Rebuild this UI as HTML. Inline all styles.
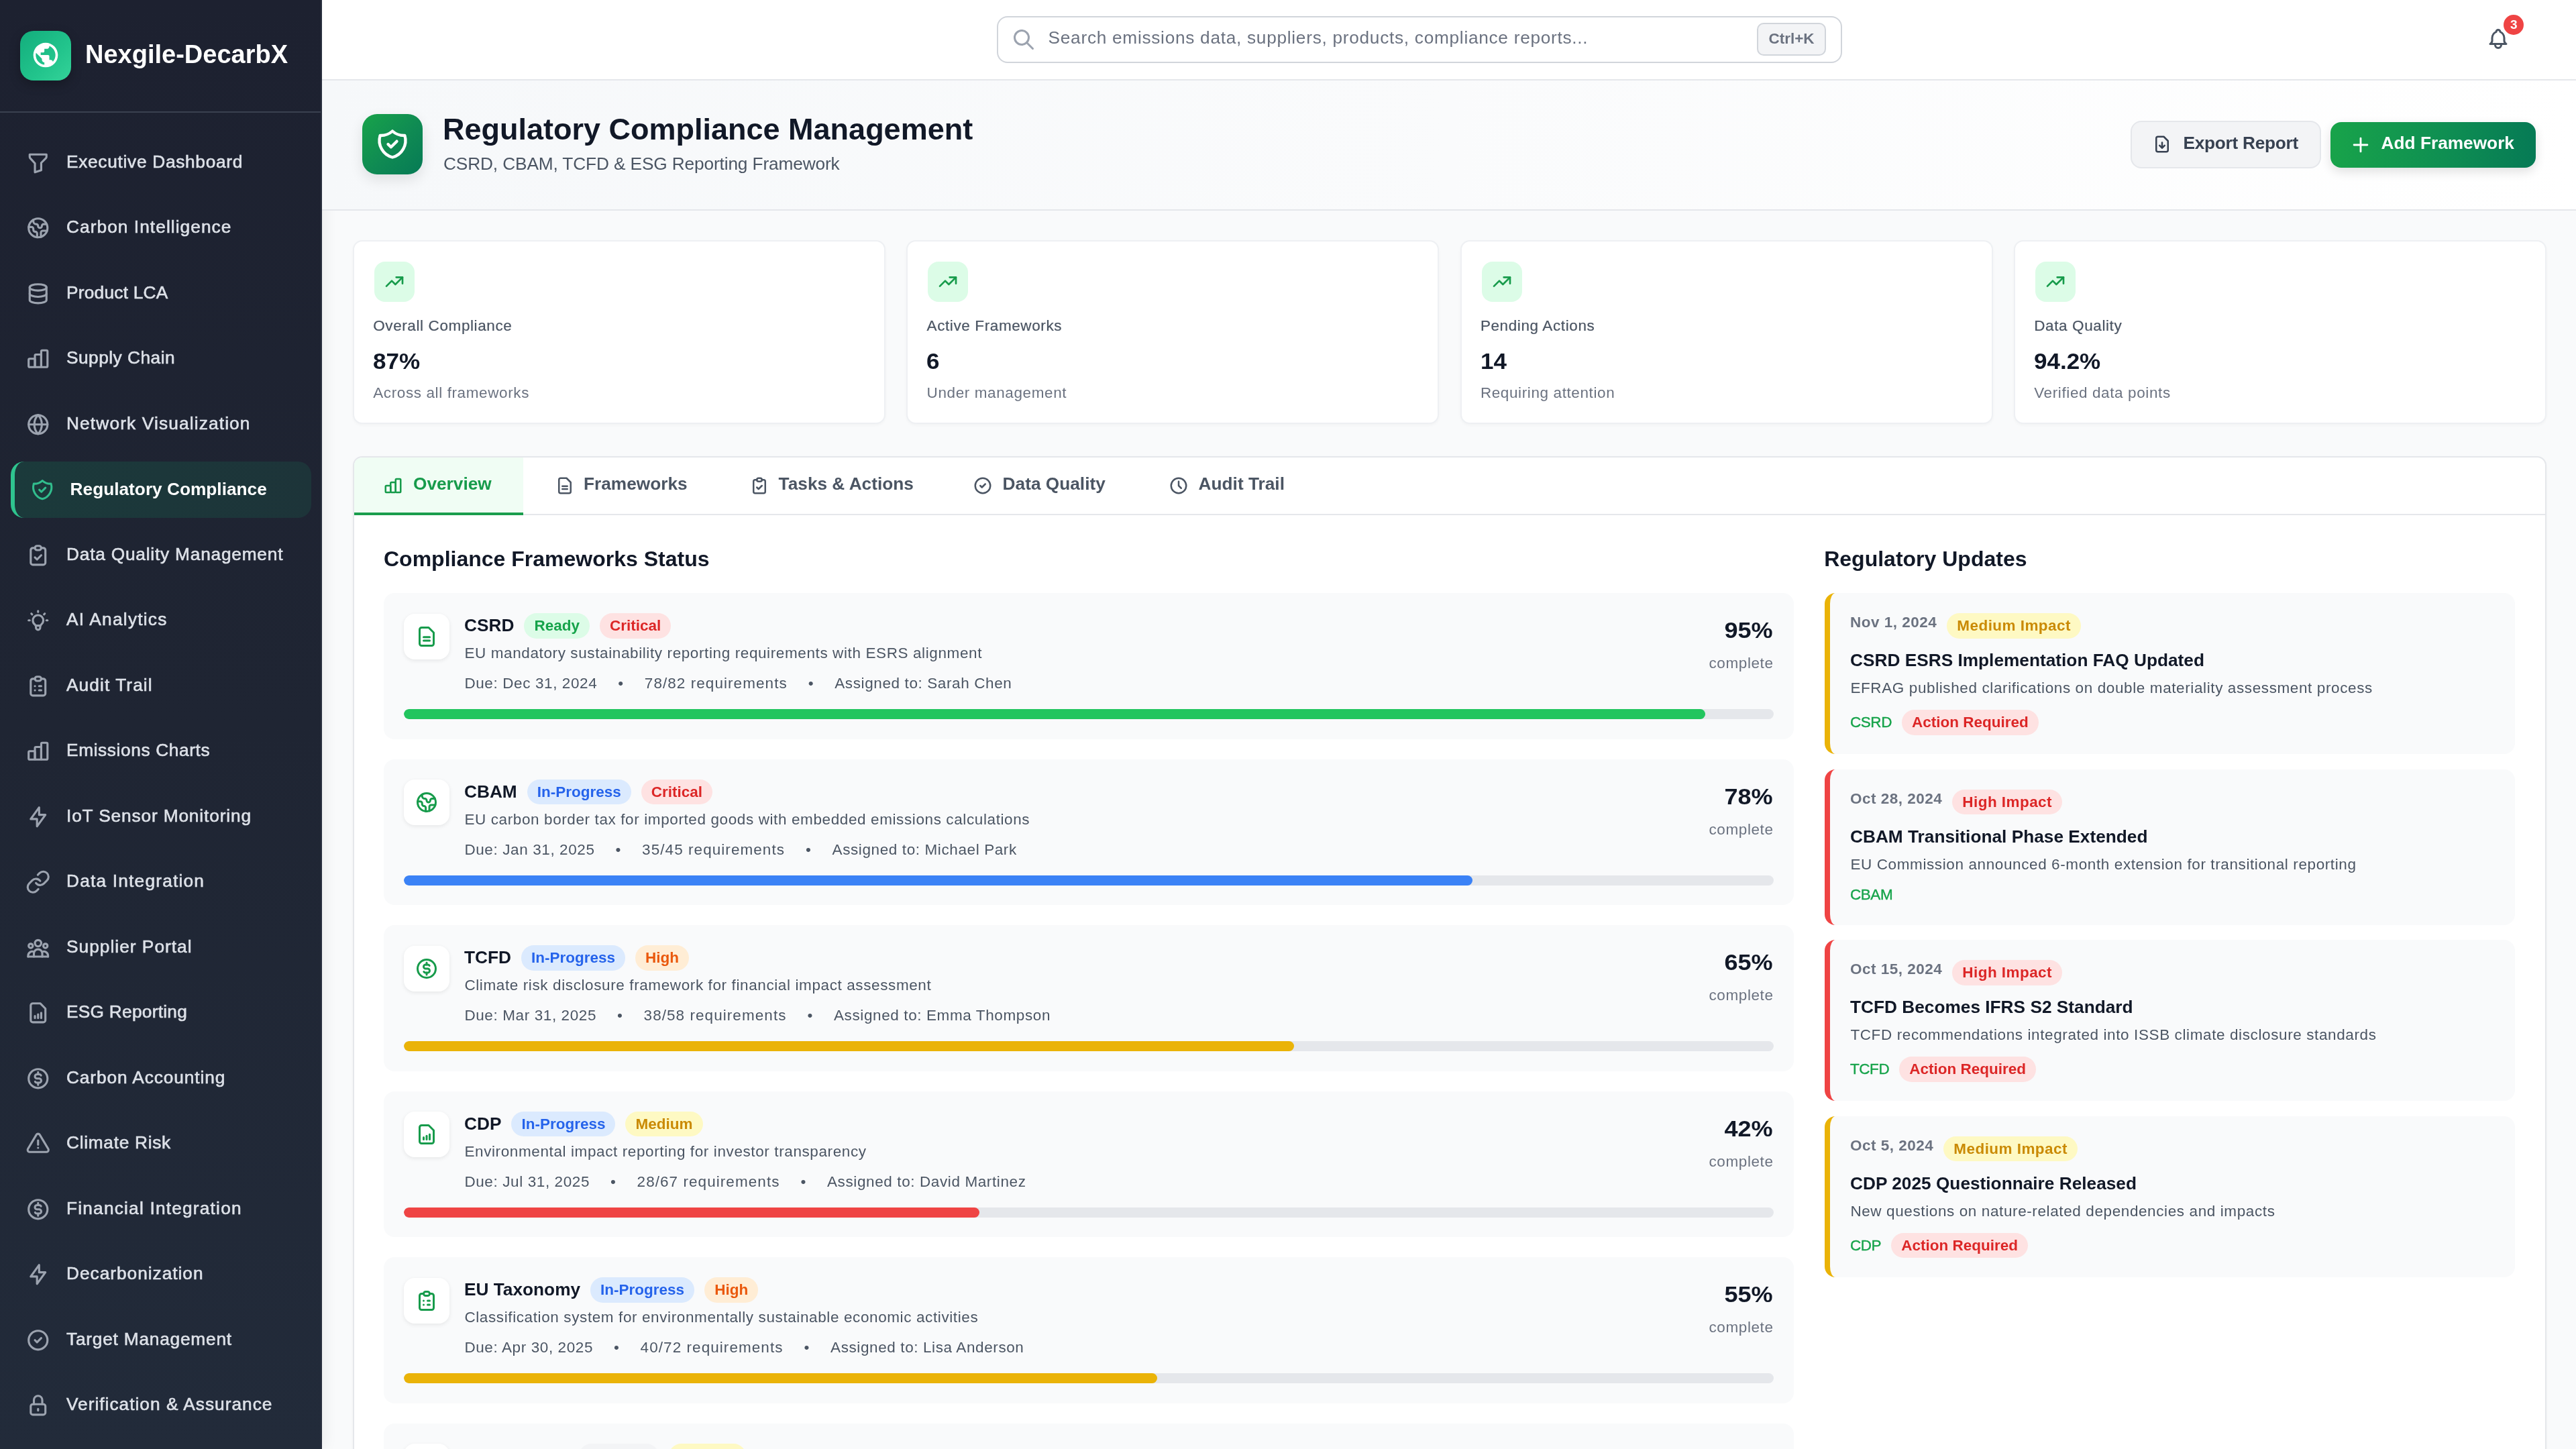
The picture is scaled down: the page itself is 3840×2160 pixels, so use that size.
<!DOCTYPE html>
<html><head><meta charset="utf-8"><title>Regulatory Compliance Management</title>
<style>
*{box-sizing:border-box;margin:0;padding:0}
html,body{width:100%;height:100%;overflow:hidden;background:#f9fafb}
.root{will-change:transform;position:relative;width:1920px;height:1080px;overflow:hidden;font-family:"Liberation Sans",sans-serif;background:#f9fafb}
@media (min-width:2500px){.root{zoom:2}}
.t{position:absolute;white-space:nowrap}
.a{position:absolute}
svg{display:block}
</style></head><body><div class="root">

<div class="a" style="left:0;top:0;width:240px;height:1080px;background:linear-gradient(180deg,#1d2130 0%,#1f2533 50%,#222b3a 100%);border-right:1px solid #2b3140;box-shadow:2px 0 10px rgba(0,0,0,0.06)">
<div class="a" style="left:0;top:83px;width:239px;height:1px;background:#3a4150"></div>
<div class="a" style="left:15px;top:22.75px;width:38px;height:37.25px;border-radius:10px;background:linear-gradient(135deg,#13ad7c 0%,#22c48c 60%,#34d399 100%);box-shadow:0 3px 8px rgba(0,0,0,0.25)"><svg viewBox="0 0 24 24" style="position:absolute;left:7.9px;top:7.2px;width:22px;height:22px" fill="#fff" fill-rule="evenodd"><path d="M12 2C6.48 2 2 6.48 2 12s4.48 10 10 10 10-4.48 10-10S17.52 2 12 2zm-1 17.93c-3.95-.49-7-3.85-7-7.93 0-.62.08-1.21.21-1.79L9 15v1c0 1.1.9 2 2 2v1.93zm6.9-2.54c-.26-.81-1-1.39-1.9-1.39h-1v-3c0-.55-.45-1-1-1H8v-2h2c.55 0 1-.45 1-1V7h2c1.1 0 2-.9 2-2v-.41c2.93 1.19 5 4.06 5 7.41 0 2.08-.8 3.97-2.1 5.39z"/></svg></div>
<div class="t" style="left:63.5px;top:27.40px;font-size:19px;line-height:26.6px;color:#ffffff;font-weight:700;">Nexgile-DecarbX</div>
<svg viewBox="0 0 24 24" style="width:18.75px;height:18.75px;position:absolute;left:18.95px;top:111.8px;color:#9ca3af;" fill="none" stroke="currentColor" stroke-width="2" stroke-linecap="round" stroke-linejoin="round"><path d="M4 4h16v2.172a2 2 0 0 1 -.586 1.414l-4.414 4.414v7l-6 2v-8.5l-4.48 -4.928a2 2 0 0 1 -.52 -1.345v-2.227z"/></svg>
<div class="t" style="left:49.5px;top:111.41px;font-size:13.125px;line-height:18.38px;color:#dde1e8;font-weight:400;letter-spacing:0.0272em;-webkit-text-stroke:0.3px #dde1e8;">Executive Dashboard</div>
<svg viewBox="0 0 24 24" style="width:18.75px;height:18.75px;position:absolute;left:18.95px;top:160.55px;color:#9ca3af;" fill="none" stroke="currentColor" stroke-width="2" stroke-linecap="round" stroke-linejoin="round"><g transform="translate(12 12) scale(0.9) translate(-12 -12)" stroke-width="2.22"><circle cx="12" cy="12" r="10"/><path d="M21.54 15H17a2 2 0 0 0-2 2v4.54"/><path d="M7 3.34V5a3 3 0 0 0 3 3a2 2 0 0 1 2 2c0 1.1.9 2 2 2a2 2 0 0 0 2-2c0-1.1.9-2 2-2h3.17"/><path d="M11 21.95V18a2 2 0 0 0-2-2a2 2 0 0 1-2-2v-1a2 2 0 0 0-2-2H2.05"/></g></svg>
<div class="t" style="left:49.5px;top:160.16px;font-size:13.125px;line-height:18.38px;color:#dde1e8;font-weight:400;letter-spacing:0.0406em;-webkit-text-stroke:0.3px #dde1e8;">Carbon Intelligence</div>
<svg viewBox="0 0 24 24" style="width:18.75px;height:18.75px;position:absolute;left:18.95px;top:209.3px;color:#9ca3af;" fill="none" stroke="currentColor" stroke-width="2" stroke-linecap="round" stroke-linejoin="round"><path d="M12 6m-8 0a8 3 0 1 0 16 0a8 3 0 1 0 -16 0"/><path d="M4 6v6a8 3 0 0 0 16 0v-6"/><path d="M4 12v6a8 3 0 0 0 16 0v-6"/></svg>
<div class="t" style="left:49.5px;top:208.91px;font-size:13.125px;line-height:18.38px;color:#dde1e8;font-weight:400;letter-spacing:0.0093em;-webkit-text-stroke:0.3px #dde1e8;">Product LCA</div>
<svg viewBox="0 0 24 24" style="width:18.75px;height:18.75px;position:absolute;left:18.95px;top:258.05px;color:#9ca3af;" fill="none" stroke="currentColor" stroke-width="2" stroke-linecap="round" stroke-linejoin="round"><path d="M3 13a1 1 0 0 1 1 -1h4a1 1 0 0 1 1 1v6a1 1 0 0 1 -1 1h-4a1 1 0 0 1 -1 -1z"/><path d="M9 9a1 1 0 0 1 1 -1h4a1 1 0 0 1 1 1v10a1 1 0 0 1 -1 1h-4a1 1 0 0 1 -1 -1z"/><path d="M15 5a1 1 0 0 1 1 -1h4a1 1 0 0 1 1 1v14a1 1 0 0 1 -1 1h-4a1 1 0 0 1 -1 -1z"/></svg>
<div class="t" style="left:49.5px;top:257.66px;font-size:13.125px;line-height:18.38px;color:#dde1e8;font-weight:400;letter-spacing:0.0188em;-webkit-text-stroke:0.3px #dde1e8;">Supply Chain</div>
<svg viewBox="0 0 24 24" style="width:18.75px;height:18.75px;position:absolute;left:18.95px;top:306.8px;color:#9ca3af;" fill="none" stroke="currentColor" stroke-width="2" stroke-linecap="round" stroke-linejoin="round"><g transform="translate(12 12) scale(0.9) translate(-12 -12)" stroke-width="2.22"><circle cx="12" cy="12" r="10"/><path d="M12 2a14.5 14.5 0 0 0 0 20a14.5 14.5 0 0 0 0-20"/><path d="M2 12h20"/></g></svg>
<div class="t" style="left:49.5px;top:306.41px;font-size:13.125px;line-height:18.38px;color:#dde1e8;font-weight:400;letter-spacing:0.0438em;-webkit-text-stroke:0.3px #dde1e8;">Network Visualization</div>
<div class="a" style="left:8px;top:343.95px;width:224px;height:42px;border-radius:10px;background:linear-gradient(90deg,#1b3a3b,#1d3439);border-left:3px solid #2fc48f"></div>
<svg viewBox="0 0 24 24" style="width:18.2px;height:18.2px;position:absolute;left:22.25px;top:355.85px;color:#31bd8d;" fill="none" stroke="currentColor" stroke-width="2" stroke-linecap="round" stroke-linejoin="round"><path d="M9 12l2 2l4 -4"/><path d="M12 3a12 12 0 0 0 8.5 3a12 12 0 0 1 -8.5 15a12 12 0 0 1 -8.5 -15a12 12 0 0 0 8.5 -3"/></svg>
<div class="t" style="left:52.3px;top:355.36px;font-size:13.125px;line-height:18.38px;color:#ffffff;font-weight:700;">Regulatory Compliance</div>
<svg viewBox="0 0 24 24" style="width:18.75px;height:18.75px;position:absolute;left:18.95px;top:404.3px;color:#9ca3af;" fill="none" stroke="currentColor" stroke-width="2" stroke-linecap="round" stroke-linejoin="round"><path d="M9 5h-2a2 2 0 0 0 -2 2v12a2 2 0 0 0 2 2h10a2 2 0 0 0 2 -2v-12a2 2 0 0 0 -2 -2h-2"/><path d="M9 5a2 2 0 0 1 2 -2h2a2 2 0 0 1 2 2v0a2 2 0 0 1 -2 2h-2a2 2 0 0 1 -2 -2z"/><path d="M9 14l2 2l4 -4"/></svg>
<div class="t" style="left:49.5px;top:403.91px;font-size:13.125px;line-height:18.38px;color:#dde1e8;font-weight:400;letter-spacing:0.0303em;-webkit-text-stroke:0.3px #dde1e8;">Data Quality Management</div>
<svg viewBox="0 0 24 24" style="width:18.75px;height:18.75px;position:absolute;left:18.95px;top:453.05px;color:#9ca3af;" fill="none" stroke="currentColor" stroke-width="2" stroke-linecap="round" stroke-linejoin="round"><path d="M3 12h1m8 -9v1m8 8h1m-15.4 -6.4l.7 .7m12.1 -.7l-.7 .7"/><path d="M9 16a5 5 0 1 1 6 0a3.5 3.5 0 0 0 -1 3a2 2 0 0 1 -4 0a3.5 3.5 0 0 0 -1 -3"/><path d="M9.7 17l4.6 0"/></svg>
<div class="t" style="left:49.5px;top:452.66px;font-size:13.125px;line-height:18.38px;color:#dde1e8;font-weight:400;letter-spacing:0.0473em;-webkit-text-stroke:0.3px #dde1e8;">AI Analytics</div>
<svg viewBox="0 0 24 24" style="width:18.75px;height:18.75px;position:absolute;left:18.95px;top:501.8px;color:#9ca3af;" fill="none" stroke="currentColor" stroke-width="2" stroke-linecap="round" stroke-linejoin="round"><path d="M9 5h-2a2 2 0 0 0 -2 2v12a2 2 0 0 0 2 2h10a2 2 0 0 0 2 -2v-12a2 2 0 0 0 -2 -2h-2"/><path d="M9 5a2 2 0 0 1 2 -2h2a2 2 0 0 1 2 2v0a2 2 0 0 1 -2 2h-2a2 2 0 0 1 -2 -2z"/><path d="M9 12l.01 0"/><path d="M13 12l2 0"/><path d="M9 16l.01 0"/><path d="M13 16l2 0"/></svg>
<div class="t" style="left:49.5px;top:501.41px;font-size:13.125px;line-height:18.38px;color:#dde1e8;font-weight:400;letter-spacing:0.0415em;-webkit-text-stroke:0.3px #dde1e8;">Audit Trail</div>
<svg viewBox="0 0 24 24" style="width:18.75px;height:18.75px;position:absolute;left:18.95px;top:550.55px;color:#9ca3af;" fill="none" stroke="currentColor" stroke-width="2" stroke-linecap="round" stroke-linejoin="round"><path d="M3 13a1 1 0 0 1 1 -1h4a1 1 0 0 1 1 1v6a1 1 0 0 1 -1 1h-4a1 1 0 0 1 -1 -1z"/><path d="M9 9a1 1 0 0 1 1 -1h4a1 1 0 0 1 1 1v10a1 1 0 0 1 -1 1h-4a1 1 0 0 1 -1 -1z"/><path d="M15 5a1 1 0 0 1 1 -1h4a1 1 0 0 1 1 1v14a1 1 0 0 1 -1 1h-4a1 1 0 0 1 -1 -1z"/></svg>
<div class="t" style="left:49.5px;top:550.16px;font-size:13.125px;line-height:18.38px;color:#dde1e8;font-weight:400;letter-spacing:0.0239em;-webkit-text-stroke:0.3px #dde1e8;">Emissions Charts</div>
<svg viewBox="0 0 24 24" style="width:18.75px;height:18.75px;position:absolute;left:18.95px;top:599.3px;color:#9ca3af;" fill="none" stroke="currentColor" stroke-width="2" stroke-linecap="round" stroke-linejoin="round"><path d="M13 3l0 7l6 0l-8 11l0 -7l-6 0l8 -11"/></svg>
<div class="t" style="left:49.5px;top:598.91px;font-size:13.125px;line-height:18.38px;color:#dde1e8;font-weight:400;letter-spacing:0.0328em;-webkit-text-stroke:0.3px #dde1e8;">IoT Sensor Monitoring</div>
<svg viewBox="0 0 24 24" style="width:18.75px;height:18.75px;position:absolute;left:18.95px;top:648.05px;color:#9ca3af;" fill="none" stroke="currentColor" stroke-width="2" stroke-linecap="round" stroke-linejoin="round"><path d="M10 13a5 5 0 0 0 7.54.54l3-3a5 5 0 0 0-7.07-7.07l-1.72 1.71"/><path d="M14 11a5 5 0 0 0-7.54-.54l-3 3a5 5 0 0 0 7.07 7.07l1.71-1.71"/></svg>
<div class="t" style="left:49.5px;top:647.66px;font-size:13.125px;line-height:18.38px;color:#dde1e8;font-weight:400;letter-spacing:0.046em;-webkit-text-stroke:0.3px #dde1e8;">Data Integration</div>
<svg viewBox="0 0 24 24" style="width:18.75px;height:18.75px;position:absolute;left:18.95px;top:696.8px;color:#9ca3af;" fill="none" stroke="currentColor" stroke-width="2" stroke-linecap="round" stroke-linejoin="round"><circle cx="12" cy="7.7" r="3"/><circle cx="5" cy="10.2" r="2"/><circle cx="19" cy="10.2" r="2"/><path d="M2.5 20.5v-1a4 4 0 0 1 5.6 -3.6"/><path d="M8 20.5v-3a4 4 0 0 1 8 0v3"/><path d="M21.5 20.5v-1a4 4 0 0 0 -5.6 -3.6"/><path d="M2.5 20.5h19"/></svg>
<div class="t" style="left:49.5px;top:696.41px;font-size:13.125px;line-height:18.38px;color:#dde1e8;font-weight:400;letter-spacing:0.0392em;-webkit-text-stroke:0.3px #dde1e8;">Supplier Portal</div>
<svg viewBox="0 0 24 24" style="width:18.75px;height:18.75px;position:absolute;left:18.95px;top:745.55px;color:#9ca3af;" fill="none" stroke="currentColor" stroke-width="2" stroke-linecap="round" stroke-linejoin="round"><path d="M5 5a2 2 0 0 1 2 -2h7l5 5v11a2 2 0 0 1 -2 2h-10a2 2 0 0 1 -2 -2z"/><path d="M9 17v-2"/><path d="M12 17v-3.5"/><path d="M15 17v-5"/></svg>
<div class="t" style="left:49.5px;top:745.16px;font-size:13.125px;line-height:18.38px;color:#dde1e8;font-weight:400;letter-spacing:0.0103em;-webkit-text-stroke:0.3px #dde1e8;">ESG Reporting</div>
<svg viewBox="0 0 24 24" style="width:18.75px;height:18.75px;position:absolute;left:18.95px;top:794.3px;color:#9ca3af;" fill="none" stroke="currentColor" stroke-width="2" stroke-linecap="round" stroke-linejoin="round"><circle cx="12" cy="12" r="9"/><path d="M14.8 9a2 2 0 0 0 -1.8 -1h-2a2 2 0 1 0 0 4h2a2 2 0 1 1 0 4h-2a2 2 0 0 1 -1.8 -1"/><path d="M12 6v2m0 8v2"/></svg>
<div class="t" style="left:49.5px;top:793.91px;font-size:13.125px;line-height:18.38px;color:#dde1e8;font-weight:400;letter-spacing:0.0346em;-webkit-text-stroke:0.3px #dde1e8;">Carbon Accounting</div>
<svg viewBox="0 0 24 24" style="width:18.75px;height:18.75px;position:absolute;left:18.95px;top:843.05px;color:#9ca3af;" fill="none" stroke="currentColor" stroke-width="2" stroke-linecap="round" stroke-linejoin="round"><path d="M12 9v4"/><path d="M10.363 3.591l-8.106 13.534a1.914 1.914 0 0 0 1.636 2.871h16.214a1.914 1.914 0 0 0 1.636 -2.87l-8.106 -13.536a1.914 1.914 0 0 0 -3.274 0z"/><path d="M12 16h.01"/></svg>
<div class="t" style="left:49.5px;top:842.66px;font-size:13.125px;line-height:18.38px;color:#dde1e8;font-weight:400;letter-spacing:0.0272em;-webkit-text-stroke:0.3px #dde1e8;">Climate Risk</div>
<svg viewBox="0 0 24 24" style="width:18.75px;height:18.75px;position:absolute;left:18.95px;top:891.8px;color:#9ca3af;" fill="none" stroke="currentColor" stroke-width="2" stroke-linecap="round" stroke-linejoin="round"><circle cx="12" cy="12" r="9"/><path d="M14.8 9a2 2 0 0 0 -1.8 -1h-2a2 2 0 1 0 0 4h2a2 2 0 1 1 0 4h-2a2 2 0 0 1 -1.8 -1"/><path d="M12 6v2m0 8v2"/></svg>
<div class="t" style="left:49.5px;top:891.41px;font-size:13.125px;line-height:18.38px;color:#dde1e8;font-weight:400;letter-spacing:0.046em;-webkit-text-stroke:0.3px #dde1e8;">Financial Integration</div>
<svg viewBox="0 0 24 24" style="width:18.75px;height:18.75px;position:absolute;left:18.95px;top:940.55px;color:#9ca3af;" fill="none" stroke="currentColor" stroke-width="2" stroke-linecap="round" stroke-linejoin="round"><path d="M13 3l0 7l6 0l-8 11l0 -7l-6 0l8 -11"/></svg>
<div class="t" style="left:49.5px;top:940.16px;font-size:13.125px;line-height:18.38px;color:#dde1e8;font-weight:400;letter-spacing:0.0376em;-webkit-text-stroke:0.3px #dde1e8;">Decarbonization</div>
<svg viewBox="0 0 24 24" style="width:18.75px;height:18.75px;position:absolute;left:18.95px;top:989.3px;color:#9ca3af;" fill="none" stroke="currentColor" stroke-width="2" stroke-linecap="round" stroke-linejoin="round"><circle cx="12" cy="12" r="9"/><path d="M9 12l2 2l4 -4"/></svg>
<div class="t" style="left:49.5px;top:988.91px;font-size:13.125px;line-height:18.38px;color:#dde1e8;font-weight:400;letter-spacing:0.03em;-webkit-text-stroke:0.3px #dde1e8;">Target Management</div>
<svg viewBox="0 0 24 24" style="width:18.75px;height:18.75px;position:absolute;left:18.95px;top:1038.05px;color:#9ca3af;" fill="none" stroke="currentColor" stroke-width="2" stroke-linecap="round" stroke-linejoin="round"><path d="M5 13a2 2 0 0 1 2 -2h10a2 2 0 0 1 2 2v6a2 2 0 0 1 -2 2h-10a2 2 0 0 1 -2 -2v-6z"/><path d="M12 15.5v1.5"/><path d="M8 11v-4a4 4 0 1 1 8 0v4"/></svg>
<div class="t" style="left:49.5px;top:1037.66px;font-size:13.125px;line-height:18.38px;color:#dde1e8;font-weight:400;letter-spacing:0.0387em;-webkit-text-stroke:0.3px #dde1e8;">Verification &amp; Assurance</div>
</div>
<div class="a" style="left:240px;top:0;width:1680px;height:60px;background:#ffffff;border-bottom:1px solid #e5e7eb"></div>
<div class="a" style="left:743px;top:12px;width:630px;height:35px;border:1px solid #d1d5db;border-radius:8px;background:#fff"></div>
<svg viewBox="0 0 24 24" style="width:18px;height:18px;position:absolute;left:754px;top:20.5px;color:#9ca3af;" fill="none" stroke="currentColor" stroke-width="2" stroke-linecap="round" stroke-linejoin="round"><path d="M10 10m-7 0a7 7 0 1 0 14 0a7 7 0 1 0 -14 0"/><path d="M21 21l-6 -6"/></svg>
<div class="t" style="left:781.3px;top:19.01px;font-size:13.125px;line-height:18.38px;color:#6b7280;font-weight:400;letter-spacing:0.027em;">Search emissions data, suppliers, products, compliance reports...</div>
<div class="a" style="left:1309.3px;top:17.2px;width:51.5px;height:24.5px;border:1px solid #d1d5db;border-radius:5px;background:#f3f4f6"></div>
<div class="t" style="left:1318.2px;top:21.02px;font-size:11.25px;line-height:15.75px;color:#6b7280;font-weight:700;">Ctrl+K</div>
<svg viewBox="0 0 24 24" style="width:18px;height:18px;position:absolute;left:1852.75px;top:20px;color:#4b5563;" fill="none" stroke="currentColor" stroke-width="2" stroke-linecap="round" stroke-linejoin="round"><path d="M10 5a2 2 0 1 1 4 0a7 7 0 0 1 4 6v3a4 4 0 0 0 2 3h-16a4 4 0 0 0 2 -3v-3a7 7 0 0 1 4 -6"/><path d="M9 17v1a3 3 0 0 0 6 0v-1"/></svg>
<div class="a" style="left:1866px;top:11px;width:15px;height:15px;border-radius:50%;background:#ef4444"></div>
<div class="t" style="left:1871px;top:11.95px;font-size:9.5px;line-height:13.3px;color:#ffffff;font-weight:700;">3</div>
<div class="a" style="left:240px;top:60px;width:1680px;height:97px;background:linear-gradient(90deg,#f6f8fa 0%,#fafbfc 50%,#ffffff 100%);border-bottom:1px solid #e5e7eb"></div>
<div class="a" style="left:270px;top:85px;width:45px;height:45px;border-radius:11px;background:linear-gradient(135deg,#18a34a 0%,#0f8a53 55%,#067a55 100%);box-shadow:0 4px 10px rgba(0,0,0,0.10)"><svg viewBox="0 0 24 24" style="width:26px;height:26px;position:absolute;left:9.5px;top:9.5px;color:#ffffff;" fill="none" stroke="currentColor" stroke-width="2" stroke-linecap="round" stroke-linejoin="round"><path d="M9 12l2 2l4 -4"/><path d="M12 3a12 12 0 0 0 8.5 3a12 12 0 0 1 -8.5 15a12 12 0 0 1 -8.5 -15a12 12 0 0 0 8.5 -3"/></svg></div>
<div class="t" style="left:330px;top:80.45px;font-size:22.5px;line-height:31.5px;color:#111827;font-weight:700;">Regulatory Compliance Management</div>
<div class="t" style="left:330.5px;top:113.11px;font-size:13.125px;line-height:18.38px;color:#4b5563;font-weight:400;letter-spacing:-0.005em;">CSRD, CBAM, TCFD &amp; ESG Reporting Framework</div>
<div class="a" style="left:1588px;top:90px;width:142px;height:35.5px;border:1px solid #e5e7eb;border-radius:8px;background:#f3f4f6"></div>
<svg viewBox="0 0 24 24" style="width:15px;height:15px;position:absolute;left:1604px;top:99.75px;color:#374151;" fill="none" stroke="currentColor" stroke-width="2" stroke-linecap="round" stroke-linejoin="round"><path d="M5 5a2 2 0 0 1 2 -2h7l5 5v11a2 2 0 0 1 -2 2h-10a2 2 0 0 1 -2 -2z"/><path d="M12 10v6"/><path d="M9 13.5l3 3l3 -3"/></svg>
<div class="t" style="left:1627.2px;top:97.61px;font-size:13.125px;line-height:18.38px;color:#374151;font-weight:700;letter-spacing:-0.01em;">Export Report</div>
<div class="a" style="left:1737px;top:91px;width:153px;height:34px;border-radius:8px;background:linear-gradient(90deg,#18a34a 0%,#0f8f52 55%,#067a55 100%);box-shadow:0 3px 8px rgba(0,0,0,0.12)"></div>
<svg viewBox="0 0 24 24" style="width:17px;height:17px;position:absolute;left:1751px;top:99.3px;color:#ffffff;" fill="none" stroke="currentColor" stroke-width="2" stroke-linecap="round" stroke-linejoin="round"><path d="M12 5l0 14"/><path d="M5 12l14 0"/></svg>
<div class="t" style="left:1774.8px;top:97.61px;font-size:13.125px;line-height:18.38px;color:#ffffff;font-weight:700;">Add Framework</div>
<div class="a" style="left:263.0px;top:179px;width:397px;height:137px;background:#fff;border:1px solid #eef0f3;border-radius:7px;box-shadow:0 1px 2px rgba(0,0,0,0.03)"></div>
<div class="a" style="left:279.0px;top:195px;width:30px;height:30px;border-radius:8px;background:#dcfce7"></div>
<svg viewBox="0 0 24 24" style="width:16px;height:16px;position:absolute;left:286.0px;top:202px;color:#179b4b;" fill="none" stroke="currentColor" stroke-width="2" stroke-linecap="round" stroke-linejoin="round"><path d="M3 17l6 -6l4 4l8 -8"/><path d="M14 7l7 0l0 7"/></svg>
<div class="t" style="left:278.1px;top:235.12px;font-size:11.25px;line-height:15.75px;color:#4b5563;font-weight:400;letter-spacing:0.027em;-webkit-text-stroke:0.12px #4b5563;">Overall Compliance</div>
<div class="t" style="left:278.0px;top:257.92px;font-size:16.4px;line-height:22.96px;color:#111827;font-weight:700;transform:scaleX(1.067);transform-origin:left center;">87%</div>
<div class="t" style="left:278.1px;top:285.12px;font-size:11.25px;line-height:15.75px;color:#6b7280;font-weight:400;letter-spacing:0.027em;">Across all frameworks</div>
<div class="a" style="left:675.67px;top:179px;width:397px;height:137px;background:#fff;border:1px solid #eef0f3;border-radius:7px;box-shadow:0 1px 2px rgba(0,0,0,0.03)"></div>
<div class="a" style="left:691.67px;top:195px;width:30px;height:30px;border-radius:8px;background:#dcfce7"></div>
<svg viewBox="0 0 24 24" style="width:16px;height:16px;position:absolute;left:698.67px;top:202px;color:#179b4b;" fill="none" stroke="currentColor" stroke-width="2" stroke-linecap="round" stroke-linejoin="round"><path d="M3 17l6 -6l4 4l8 -8"/><path d="M14 7l7 0l0 7"/></svg>
<div class="t" style="left:690.77px;top:235.12px;font-size:11.25px;line-height:15.75px;color:#4b5563;font-weight:400;letter-spacing:0.027em;-webkit-text-stroke:0.12px #4b5563;">Active Frameworks</div>
<div class="t" style="left:690.67px;top:257.92px;font-size:16.4px;line-height:22.96px;color:#111827;font-weight:700;transform:scaleX(1.067);transform-origin:left center;">6</div>
<div class="t" style="left:690.77px;top:285.12px;font-size:11.25px;line-height:15.75px;color:#6b7280;font-weight:400;letter-spacing:0.027em;">Under management</div>
<div class="a" style="left:1088.34px;top:179px;width:397px;height:137px;background:#fff;border:1px solid #eef0f3;border-radius:7px;box-shadow:0 1px 2px rgba(0,0,0,0.03)"></div>
<div class="a" style="left:1104.34px;top:195px;width:30px;height:30px;border-radius:8px;background:#dcfce7"></div>
<svg viewBox="0 0 24 24" style="width:16px;height:16px;position:absolute;left:1111.34px;top:202px;color:#179b4b;" fill="none" stroke="currentColor" stroke-width="2" stroke-linecap="round" stroke-linejoin="round"><path d="M3 17l6 -6l4 4l8 -8"/><path d="M14 7l7 0l0 7"/></svg>
<div class="t" style="left:1103.4399999999998px;top:235.12px;font-size:11.25px;line-height:15.75px;color:#4b5563;font-weight:400;letter-spacing:0.027em;-webkit-text-stroke:0.12px #4b5563;">Pending Actions</div>
<div class="t" style="left:1103.34px;top:257.92px;font-size:16.4px;line-height:22.96px;color:#111827;font-weight:700;transform:scaleX(1.067);transform-origin:left center;">14</div>
<div class="t" style="left:1103.4399999999998px;top:285.12px;font-size:11.25px;line-height:15.75px;color:#6b7280;font-weight:400;letter-spacing:0.027em;">Requiring attention</div>
<div class="a" style="left:1501.01px;top:179px;width:397px;height:137px;background:#fff;border:1px solid #eef0f3;border-radius:7px;box-shadow:0 1px 2px rgba(0,0,0,0.03)"></div>
<div class="a" style="left:1517.01px;top:195px;width:30px;height:30px;border-radius:8px;background:#dcfce7"></div>
<svg viewBox="0 0 24 24" style="width:16px;height:16px;position:absolute;left:1524.01px;top:202px;color:#179b4b;" fill="none" stroke="currentColor" stroke-width="2" stroke-linecap="round" stroke-linejoin="round"><path d="M3 17l6 -6l4 4l8 -8"/><path d="M14 7l7 0l0 7"/></svg>
<div class="t" style="left:1516.11px;top:235.12px;font-size:11.25px;line-height:15.75px;color:#4b5563;font-weight:400;letter-spacing:0.027em;-webkit-text-stroke:0.12px #4b5563;">Data Quality</div>
<div class="t" style="left:1516.01px;top:257.92px;font-size:16.4px;line-height:22.96px;color:#111827;font-weight:700;transform:scaleX(1.067);transform-origin:left center;">94.2%</div>
<div class="t" style="left:1516.11px;top:285.12px;font-size:11.25px;line-height:15.75px;color:#6b7280;font-weight:400;letter-spacing:0.027em;">Verified data points</div>
<div class="a" style="left:263px;top:340px;width:1635px;height:800px;background:#fff;border:1px solid #e5e7eb;border-radius:7px;box-shadow:0 1px 2px rgba(0,0,0,0.03)"></div>
<div class="a" style="left:264px;top:383px;width:1633px;height:1px;background:#e5e7eb"></div>
<div class="a" style="left:264px;top:341px;width:126px;height:43px;background:#f0fdf4;border-top-left-radius:6px;border-bottom:2px solid #1a9d4d"></div>
<svg viewBox="0 0 24 24" style="width:15px;height:15px;position:absolute;left:285.65px;top:354.3px;color:#179b4b;" fill="none" stroke="currentColor" stroke-width="2" stroke-linecap="round" stroke-linejoin="round"><path d="M3 13a1 1 0 0 1 1 -1h4a1 1 0 0 1 1 1v6a1 1 0 0 1 -1 1h-4a1 1 0 0 1 -1 -1z"/><path d="M9 9a1 1 0 0 1 1 -1h4a1 1 0 0 1 1 1v10a1 1 0 0 1 -1 1h-4a1 1 0 0 1 -1 -1z"/><path d="M15 5a1 1 0 0 1 1 -1h4a1 1 0 0 1 1 1v14a1 1 0 0 1 -1 1h-4a1 1 0 0 1 -1 -1z"/></svg>
<div class="t" style="left:308.0px;top:351.61px;font-size:13.125px;line-height:18.38px;color:#179b4b;font-weight:700;">Overview</div>
<svg viewBox="0 0 24 24" style="width:15px;height:15px;position:absolute;left:413.25px;top:354.3px;color:#4b5563;" fill="none" stroke="currentColor" stroke-width="2" stroke-linecap="round" stroke-linejoin="round"><path d="M5 5a2 2 0 0 1 2 -2h7l5 5v11a2 2 0 0 1 -2 2h-10a2 2 0 0 1 -2 -2z"/><path d="M9 12.5h6"/><path d="M9 16h6"/></svg>
<div class="t" style="left:435.0px;top:351.61px;font-size:13.125px;line-height:18.38px;color:#4b5563;font-weight:700;">Frameworks</div>
<svg viewBox="0 0 24 24" style="width:15px;height:15px;position:absolute;left:558.55px;top:354.3px;color:#4b5563;" fill="none" stroke="currentColor" stroke-width="2" stroke-linecap="round" stroke-linejoin="round"><path d="M9 5h-2a2 2 0 0 0 -2 2v12a2 2 0 0 0 2 2h10a2 2 0 0 0 2 -2v-12a2 2 0 0 0 -2 -2h-2"/><path d="M9 5a2 2 0 0 1 2 -2h2a2 2 0 0 1 2 2v0a2 2 0 0 1 -2 2h-2a2 2 0 0 1 -2 -2z"/><path d="M9 14l2 2l4 -4"/></svg>
<div class="t" style="left:580.3px;top:351.61px;font-size:13.125px;line-height:18.38px;color:#4b5563;font-weight:700;">Tasks &amp; Actions</div>
<svg viewBox="0 0 24 24" style="width:15px;height:15px;position:absolute;left:724.75px;top:354.3px;color:#4b5563;" fill="none" stroke="currentColor" stroke-width="2" stroke-linecap="round" stroke-linejoin="round"><circle cx="12" cy="12" r="9"/><path d="M9 12l2 2l4 -4"/></svg>
<div class="t" style="left:747.3px;top:351.61px;font-size:13.125px;line-height:18.38px;color:#4b5563;font-weight:700;">Data Quality</div>
<svg viewBox="0 0 24 24" style="width:15px;height:15px;position:absolute;left:870.75px;top:354.3px;color:#4b5563;" fill="none" stroke="currentColor" stroke-width="2" stroke-linecap="round" stroke-linejoin="round"><circle cx="12" cy="12" r="9"/><path d="M12 7v5l3 3"/></svg>
<div class="t" style="left:893.3px;top:351.61px;font-size:13.125px;line-height:18.38px;color:#4b5563;font-weight:700;">Audit Trail</div>
<div class="t" style="left:286.0px;top:405.30px;font-size:16px;line-height:22.4px;color:#111827;font-weight:700;">Compliance Frameworks Status</div>
<div class="a" style="left:286px;top:442.00px;width:1051px;height:108.75px;background:#f9fafb;border-radius:8px"></div>
<div class="a" style="left:301px;top:457.40px;width:34px;height:34px;border-radius:8px;background:#fff;box-shadow:0 1px 3px rgba(0,0,0,0.08)"></div>
<svg viewBox="0 0 24 24" style="width:18px;height:18px;position:absolute;left:309px;top:465.4px;color:#179b4b;" fill="none" stroke="currentColor" stroke-width="2" stroke-linecap="round" stroke-linejoin="round"><path d="M5 5a2 2 0 0 1 2 -2h7l5 5v11a2 2 0 0 1 -2 2h-10a2 2 0 0 1 -2 -2z"/><path d="M9 12.5h6"/><path d="M9 16h6"/></svg>
<div class="a" style="left:346px;top:457.00px;height:18.75px;display:flex;align-items:center;gap:7.5px;white-space:nowrap"><span style="font-size:13.125px;font-weight:700;color:#111827;line-height:18.75px;margin-right:0px">CSRD</span><span style="display:inline-block;height:18.75px;line-height:18.75px;padding:0 7.5px;border-radius:9.4px;background:#dcfce7;color:#16a34a;font-size:11.25px;font-weight:700">Ready</span><span style="display:inline-block;height:18.75px;line-height:18.75px;padding:0 7.5px;border-radius:9.4px;background:#fee2e2;color:#dc2626;font-size:11.25px;font-weight:700">Critical</span></div>
<div class="t" style="left:346.2px;top:479.02px;font-size:11.25px;line-height:15.75px;color:#4b5563;font-weight:400;letter-spacing:0.027em;">EU mandatory sustainability reporting requirements with ESRS alignment</div>
<div class="a" style="left:346.2px;top:499.50px;height:20px;line-height:20px;display:flex;gap:15.5px;white-space:nowrap;font-size:11.25px;color:#4b5563;letter-spacing:0.027em"><span>Due: Dec 31, 2024</span><span>•</span><span style="letter-spacing:0.047em">78/82 requirements</span><span>•</span><span>Assigned to: Sarah Chen</span></div>
<div class="t" style="right:598.8px;top:458.72px;font-size:16.4px;line-height:22.96px;color:#111827;font-weight:700;transform:scaleX(1.1);transform-origin:right center;">95%</div>
<div class="t" style="right:598.2px;top:486.62px;font-size:11.25px;line-height:15.75px;color:#6b7280;font-weight:400;letter-spacing:0.027em;">complete</div>
<div class="a" style="left:301px;top:528.50px;width:1021px;height:7.5px;border-radius:4px;background:#e5e7eb;overflow:hidden"><div style="width:95%;height:100%;border-radius:4px;background:#22c55e"></div></div>
<div class="a" style="left:286px;top:565.75px;width:1051px;height:108.75px;background:#f9fafb;border-radius:8px"></div>
<div class="a" style="left:301px;top:581.15px;width:34px;height:34px;border-radius:8px;background:#fff;box-shadow:0 1px 3px rgba(0,0,0,0.08)"></div>
<svg viewBox="0 0 24 24" style="width:18px;height:18px;position:absolute;left:309px;top:589.15px;color:#179b4b;" fill="none" stroke="currentColor" stroke-width="2" stroke-linecap="round" stroke-linejoin="round"><g transform="translate(12 12) scale(0.9) translate(-12 -12)" stroke-width="2.22"><circle cx="12" cy="12" r="10"/><path d="M21.54 15H17a2 2 0 0 0-2 2v4.54"/><path d="M7 3.34V5a3 3 0 0 0 3 3a2 2 0 0 1 2 2c0 1.1.9 2 2 2a2 2 0 0 0 2-2c0-1.1.9-2 2-2h3.17"/><path d="M11 21.95V18a2 2 0 0 0-2-2a2 2 0 0 1-2-2v-1a2 2 0 0 0-2-2H2.05"/></g></svg>
<div class="a" style="left:346px;top:580.75px;height:18.75px;display:flex;align-items:center;gap:7.5px;white-space:nowrap"><span style="font-size:13.125px;font-weight:700;color:#111827;line-height:18.75px;margin-right:0px">CBAM</span><span style="display:inline-block;height:18.75px;line-height:18.75px;padding:0 7.5px;border-radius:9.4px;background:#dbeafe;color:#2563eb;font-size:11.25px;font-weight:700">In-Progress</span><span style="display:inline-block;height:18.75px;line-height:18.75px;padding:0 7.5px;border-radius:9.4px;background:#fee2e2;color:#dc2626;font-size:11.25px;font-weight:700">Critical</span></div>
<div class="t" style="left:346.2px;top:602.77px;font-size:11.25px;line-height:15.75px;color:#4b5563;font-weight:400;letter-spacing:0.027em;">EU carbon border tax for imported goods with embedded emissions calculations</div>
<div class="a" style="left:346.2px;top:623.25px;height:20px;line-height:20px;display:flex;gap:15.5px;white-space:nowrap;font-size:11.25px;color:#4b5563;letter-spacing:0.027em"><span>Due: Jan 31, 2025</span><span>•</span><span style="letter-spacing:0.047em">35/45 requirements</span><span>•</span><span>Assigned to: Michael Park</span></div>
<div class="t" style="right:598.8px;top:582.47px;font-size:16.4px;line-height:22.96px;color:#111827;font-weight:700;transform:scaleX(1.1);transform-origin:right center;">78%</div>
<div class="t" style="right:598.2px;top:610.38px;font-size:11.25px;line-height:15.75px;color:#6b7280;font-weight:400;letter-spacing:0.027em;">complete</div>
<div class="a" style="left:301px;top:652.25px;width:1021px;height:7.5px;border-radius:4px;background:#e5e7eb;overflow:hidden"><div style="width:78%;height:100%;border-radius:4px;background:#3b82f6"></div></div>
<div class="a" style="left:286px;top:689.50px;width:1051px;height:108.75px;background:#f9fafb;border-radius:8px"></div>
<div class="a" style="left:301px;top:704.90px;width:34px;height:34px;border-radius:8px;background:#fff;box-shadow:0 1px 3px rgba(0,0,0,0.08)"></div>
<svg viewBox="0 0 24 24" style="width:18px;height:18px;position:absolute;left:309px;top:712.9px;color:#179b4b;" fill="none" stroke="currentColor" stroke-width="2" stroke-linecap="round" stroke-linejoin="round"><circle cx="12" cy="12" r="9"/><path d="M14.8 9a2 2 0 0 0 -1.8 -1h-2a2 2 0 1 0 0 4h2a2 2 0 1 1 0 4h-2a2 2 0 0 1 -1.8 -1"/><path d="M12 6v2m0 8v2"/></svg>
<div class="a" style="left:346px;top:704.50px;height:18.75px;display:flex;align-items:center;gap:7.5px;white-space:nowrap"><span style="font-size:13.125px;font-weight:700;color:#111827;line-height:18.75px;margin-right:0px">TCFD</span><span style="display:inline-block;height:18.75px;line-height:18.75px;padding:0 7.5px;border-radius:9.4px;background:#dbeafe;color:#2563eb;font-size:11.25px;font-weight:700">In-Progress</span><span style="display:inline-block;height:18.75px;line-height:18.75px;padding:0 7.5px;border-radius:9.4px;background:#ffedd5;color:#ea580c;font-size:11.25px;font-weight:700">High</span></div>
<div class="t" style="left:346.2px;top:726.52px;font-size:11.25px;line-height:15.75px;color:#4b5563;font-weight:400;letter-spacing:0.027em;">Climate risk disclosure framework for financial impact assessment</div>
<div class="a" style="left:346.2px;top:747.00px;height:20px;line-height:20px;display:flex;gap:15.5px;white-space:nowrap;font-size:11.25px;color:#4b5563;letter-spacing:0.027em"><span>Due: Mar 31, 2025</span><span>•</span><span style="letter-spacing:0.047em">38/58 requirements</span><span>•</span><span>Assigned to: Emma Thompson</span></div>
<div class="t" style="right:598.8px;top:706.22px;font-size:16.4px;line-height:22.96px;color:#111827;font-weight:700;transform:scaleX(1.1);transform-origin:right center;">65%</div>
<div class="t" style="right:598.2px;top:734.12px;font-size:11.25px;line-height:15.75px;color:#6b7280;font-weight:400;letter-spacing:0.027em;">complete</div>
<div class="a" style="left:301px;top:776.00px;width:1021px;height:7.5px;border-radius:4px;background:#e5e7eb;overflow:hidden"><div style="width:65%;height:100%;border-radius:4px;background:#eab308"></div></div>
<div class="a" style="left:286px;top:813.25px;width:1051px;height:108.75px;background:#f9fafb;border-radius:8px"></div>
<div class="a" style="left:301px;top:828.65px;width:34px;height:34px;border-radius:8px;background:#fff;box-shadow:0 1px 3px rgba(0,0,0,0.08)"></div>
<svg viewBox="0 0 24 24" style="width:18px;height:18px;position:absolute;left:309px;top:836.65px;color:#179b4b;" fill="none" stroke="currentColor" stroke-width="2" stroke-linecap="round" stroke-linejoin="round"><path d="M5 5a2 2 0 0 1 2 -2h7l5 5v11a2 2 0 0 1 -2 2h-10a2 2 0 0 1 -2 -2z"/><path d="M9 17v-2"/><path d="M12 17v-3.5"/><path d="M15 17v-5"/></svg>
<div class="a" style="left:346px;top:828.25px;height:18.75px;display:flex;align-items:center;gap:7.5px;white-space:nowrap"><span style="font-size:13.125px;font-weight:700;color:#111827;line-height:18.75px;margin-right:0px">CDP</span><span style="display:inline-block;height:18.75px;line-height:18.75px;padding:0 7.5px;border-radius:9.4px;background:#dbeafe;color:#2563eb;font-size:11.25px;font-weight:700">In-Progress</span><span style="display:inline-block;height:18.75px;line-height:18.75px;padding:0 7.5px;border-radius:9.4px;background:#fef9c3;color:#ca8a04;font-size:11.25px;font-weight:700">Medium</span></div>
<div class="t" style="left:346.2px;top:850.27px;font-size:11.25px;line-height:15.75px;color:#4b5563;font-weight:400;letter-spacing:0.027em;">Environmental impact reporting for investor transparency</div>
<div class="a" style="left:346.2px;top:870.75px;height:20px;line-height:20px;display:flex;gap:15.5px;white-space:nowrap;font-size:11.25px;color:#4b5563;letter-spacing:0.027em"><span>Due: Jul 31, 2025</span><span>•</span><span style="letter-spacing:0.047em">28/67 requirements</span><span>•</span><span>Assigned to: David Martinez</span></div>
<div class="t" style="right:598.8px;top:829.97px;font-size:16.4px;line-height:22.96px;color:#111827;font-weight:700;transform:scaleX(1.1);transform-origin:right center;">42%</div>
<div class="t" style="right:598.2px;top:857.88px;font-size:11.25px;line-height:15.75px;color:#6b7280;font-weight:400;letter-spacing:0.027em;">complete</div>
<div class="a" style="left:301px;top:899.75px;width:1021px;height:7.5px;border-radius:4px;background:#e5e7eb;overflow:hidden"><div style="width:42%;height:100%;border-radius:4px;background:#ef4444"></div></div>
<div class="a" style="left:286px;top:937.00px;width:1051px;height:108.75px;background:#f9fafb;border-radius:8px"></div>
<div class="a" style="left:301px;top:952.40px;width:34px;height:34px;border-radius:8px;background:#fff;box-shadow:0 1px 3px rgba(0,0,0,0.08)"></div>
<svg viewBox="0 0 24 24" style="width:18px;height:18px;position:absolute;left:309px;top:960.4px;color:#179b4b;" fill="none" stroke="currentColor" stroke-width="2" stroke-linecap="round" stroke-linejoin="round"><path d="M9 5h-2a2 2 0 0 0 -2 2v12a2 2 0 0 0 2 2h10a2 2 0 0 0 2 -2v-12a2 2 0 0 0 -2 -2h-2"/><path d="M9 5a2 2 0 0 1 2 -2h2a2 2 0 0 1 2 2v0a2 2 0 0 1 -2 2h-2a2 2 0 0 1 -2 -2z"/><path d="M9 12l.01 0"/><path d="M13 12l2 0"/><path d="M9 16l.01 0"/><path d="M13 16l2 0"/></svg>
<div class="a" style="left:346px;top:952.00px;height:18.75px;display:flex;align-items:center;gap:7.5px;white-space:nowrap"><span style="font-size:13.125px;font-weight:700;color:#111827;line-height:18.75px;margin-right:0px">EU Taxonomy</span><span style="display:inline-block;height:18.75px;line-height:18.75px;padding:0 7.5px;border-radius:9.4px;background:#dbeafe;color:#2563eb;font-size:11.25px;font-weight:700">In-Progress</span><span style="display:inline-block;height:18.75px;line-height:18.75px;padding:0 7.5px;border-radius:9.4px;background:#ffedd5;color:#ea580c;font-size:11.25px;font-weight:700">High</span></div>
<div class="t" style="left:346.2px;top:974.02px;font-size:11.25px;line-height:15.75px;color:#4b5563;font-weight:400;letter-spacing:0.027em;">Classification system for environmentally sustainable economic activities</div>
<div class="a" style="left:346.2px;top:994.50px;height:20px;line-height:20px;display:flex;gap:15.5px;white-space:nowrap;font-size:11.25px;color:#4b5563;letter-spacing:0.027em"><span>Due: Apr 30, 2025</span><span>•</span><span style="letter-spacing:0.047em">40/72 requirements</span><span>•</span><span>Assigned to: Lisa Anderson</span></div>
<div class="t" style="right:598.8px;top:953.72px;font-size:16.4px;line-height:22.96px;color:#111827;font-weight:700;transform:scaleX(1.1);transform-origin:right center;">55%</div>
<div class="t" style="right:598.2px;top:981.62px;font-size:11.25px;line-height:15.75px;color:#6b7280;font-weight:400;letter-spacing:0.027em;">complete</div>
<div class="a" style="left:301px;top:1023.50px;width:1021px;height:7.5px;border-radius:4px;background:#e5e7eb;overflow:hidden"><div style="width:55%;height:100%;border-radius:4px;background:#eab308"></div></div>
<div class="a" style="left:286px;top:1060.75px;width:1051px;height:108.75px;background:#f9fafb;border-radius:8px"></div>
<div class="a" style="left:301px;top:1076.15px;width:34px;height:34px;border-radius:8px;background:#fff;box-shadow:0 1px 3px rgba(0,0,0,0.08)"></div>
<svg viewBox="0 0 24 24" style="width:18px;height:18px;position:absolute;left:309px;top:1084.15px;color:#179b4b;" fill="none" stroke="currentColor" stroke-width="2" stroke-linecap="round" stroke-linejoin="round"><path d="M5 5a2 2 0 0 1 2 -2h7l5 5v11a2 2 0 0 1 -2 2h-10a2 2 0 0 1 -2 -2z"/><path d="M9 12.5h6"/><path d="M9 16h6"/></svg>
<div class="a" style="left:346px;top:1075.75px;height:18.75px;display:flex;align-items:center;gap:7.5px;white-space:nowrap"><span style="font-size:13.125px;font-weight:700;color:#111827;line-height:18.75px;margin-right:0px">SEC Climate</span><span style="display:inline-block;height:18.75px;line-height:18.75px;padding:0 7.5px;border-radius:9.4px;background:#f3f4f6;color:#4b5563;font-size:11.25px;font-weight:700">Pending</span><span style="display:inline-block;height:18.75px;line-height:18.75px;padding:0 7.5px;border-radius:9.4px;background:#fef9c3;color:#ca8a04;font-size:11.25px;font-weight:700">Medium</span></div>
<div class="t" style="left:1359.6px;top:405.30px;font-size:16px;line-height:22.4px;color:#111827;font-weight:700;">Regulatory Updates</div>
<div class="a" style="left:1360px;top:442px;width:514.5px;height:120px;background:#f9fafb;border-radius:8px;border-left:4px solid #eab308"></div>
<div class="a" style="left:1379px;top:457.00px;height:18.75px;display:flex;align-items:center;gap:7.5px;white-space:nowrap"><span style="font-size:11.25px;font-weight:700;color:#6b7280;line-height:18.75px;position:relative;top:-2.3px;letter-spacing:0.022em">Nov 1, 2024</span><span style="display:inline-block;height:18.75px;line-height:18.75px;padding:0 7.5px;border-radius:9.4px;background:#fef9c3;color:#ca8a04;font-size:11.25px;font-weight:700;letter-spacing:0.02em">Medium Impact</span></div>
<div class="t" style="left:1379px;top:483.21px;font-size:13.125px;line-height:18.38px;color:#111827;font-weight:700;">CSRD ESRS Implementation FAQ Updated</div>
<div class="t" style="left:1379.2px;top:505.02px;font-size:11.25px;line-height:15.75px;color:#4b5563;font-weight:400;letter-spacing:0.027em;">EFRAG published clarifications on double materiality assessment process</div>
<div class="a" style="left:1379px;top:529.00px;height:18.75px;display:flex;align-items:center;gap:7.5px;white-space:nowrap"><span style="font-size:11.25px;font-weight:400;color:#16a34a;line-height:18.75px;letter-spacing:-0.02em;-webkit-text-stroke:0.2px #16a34a">CSRD</span><span style="display:inline-block;height:18.75px;line-height:18.75px;padding:0 7.5px;border-radius:9.4px;background:#fee2e2;color:#dc2626;font-size:11.25px;font-weight:700">Action Required</span></div>
<div class="a" style="left:1360px;top:573.25px;width:514.5px;height:116.25px;background:#f9fafb;border-radius:8px;border-left:4px solid #ef4444"></div>
<div class="a" style="left:1379px;top:588.25px;height:18.75px;display:flex;align-items:center;gap:7.5px;white-space:nowrap"><span style="font-size:11.25px;font-weight:700;color:#6b7280;line-height:18.75px;position:relative;top:-2.3px;letter-spacing:0.022em">Oct 28, 2024</span><span style="display:inline-block;height:18.75px;line-height:18.75px;padding:0 7.5px;border-radius:9.4px;background:#fee2e2;color:#dc2626;font-size:11.25px;font-weight:700;letter-spacing:0.02em">High Impact</span></div>
<div class="t" style="left:1379px;top:614.46px;font-size:13.125px;line-height:18.38px;color:#111827;font-weight:700;">CBAM Transitional Phase Extended</div>
<div class="t" style="left:1379.2px;top:636.27px;font-size:11.25px;line-height:15.75px;color:#4b5563;font-weight:400;letter-spacing:0.027em;">EU Commission announced 6-month extension for transitional reporting</div>
<div class="t" style="left:1379px;top:658.98px;font-size:11.25px;line-height:15.75px;color:#16a34a;font-weight:400;letter-spacing:-0.02em;-webkit-text-stroke:0.2px #16a34a;">CBAM</div>
<div class="a" style="left:1360px;top:700.5px;width:514.5px;height:120px;background:#f9fafb;border-radius:8px;border-left:4px solid #ef4444"></div>
<div class="a" style="left:1379px;top:715.50px;height:18.75px;display:flex;align-items:center;gap:7.5px;white-space:nowrap"><span style="font-size:11.25px;font-weight:700;color:#6b7280;line-height:18.75px;position:relative;top:-2.3px;letter-spacing:0.022em">Oct 15, 2024</span><span style="display:inline-block;height:18.75px;line-height:18.75px;padding:0 7.5px;border-radius:9.4px;background:#fee2e2;color:#dc2626;font-size:11.25px;font-weight:700;letter-spacing:0.02em">High Impact</span></div>
<div class="t" style="left:1379px;top:741.71px;font-size:13.125px;line-height:18.38px;color:#111827;font-weight:700;">TCFD Becomes IFRS S2 Standard</div>
<div class="t" style="left:1379.2px;top:763.52px;font-size:11.25px;line-height:15.75px;color:#4b5563;font-weight:400;letter-spacing:0.027em;">TCFD recommendations integrated into ISSB climate disclosure standards</div>
<div class="a" style="left:1379px;top:787.50px;height:18.75px;display:flex;align-items:center;gap:7.5px;white-space:nowrap"><span style="font-size:11.25px;font-weight:400;color:#16a34a;line-height:18.75px;letter-spacing:-0.02em;-webkit-text-stroke:0.2px #16a34a">TCFD</span><span style="display:inline-block;height:18.75px;line-height:18.75px;padding:0 7.5px;border-radius:9.4px;background:#fee2e2;color:#dc2626;font-size:11.25px;font-weight:700">Action Required</span></div>
<div class="a" style="left:1360px;top:831.75px;width:514.5px;height:120px;background:#f9fafb;border-radius:8px;border-left:4px solid #eab308"></div>
<div class="a" style="left:1379px;top:846.75px;height:18.75px;display:flex;align-items:center;gap:7.5px;white-space:nowrap"><span style="font-size:11.25px;font-weight:700;color:#6b7280;line-height:18.75px;position:relative;top:-2.3px;letter-spacing:0.022em">Oct 5, 2024</span><span style="display:inline-block;height:18.75px;line-height:18.75px;padding:0 7.5px;border-radius:9.4px;background:#fef9c3;color:#ca8a04;font-size:11.25px;font-weight:700;letter-spacing:0.02em">Medium Impact</span></div>
<div class="t" style="left:1379px;top:872.96px;font-size:13.125px;line-height:18.38px;color:#111827;font-weight:700;">CDP 2025 Questionnaire Released</div>
<div class="t" style="left:1379.2px;top:894.77px;font-size:11.25px;line-height:15.75px;color:#4b5563;font-weight:400;letter-spacing:0.027em;">New questions on nature-related dependencies and impacts</div>
<div class="a" style="left:1379px;top:918.75px;height:18.75px;display:flex;align-items:center;gap:7.5px;white-space:nowrap"><span style="font-size:11.25px;font-weight:400;color:#16a34a;line-height:18.75px;letter-spacing:-0.02em;-webkit-text-stroke:0.2px #16a34a">CDP</span><span style="display:inline-block;height:18.75px;line-height:18.75px;padding:0 7.5px;border-radius:9.4px;background:#fee2e2;color:#dc2626;font-size:11.25px;font-weight:700">Action Required</span></div>
</div></body></html>
